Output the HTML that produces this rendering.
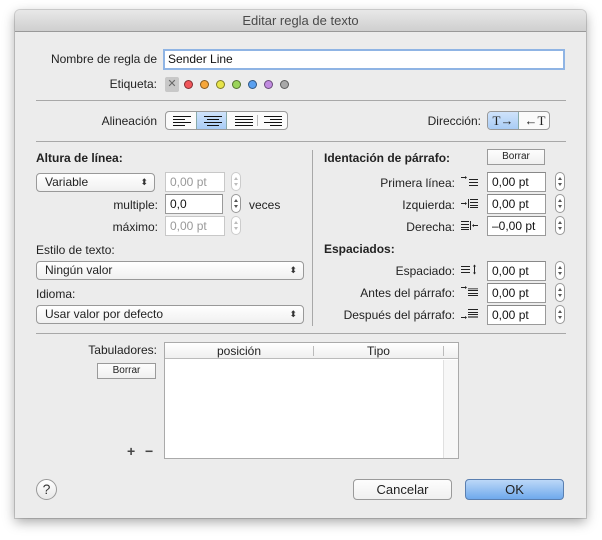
<!DOCTYPE html>
<html><head><meta charset="utf-8"><style>
*{box-sizing:border-box;margin:0;padding:0}
body{width:602px;height:540px;background:#fff;font-family:"Liberation Sans",sans-serif;font-size:12px;color:#222;position:relative;overflow:hidden}
.win{position:absolute;left:15px;top:10px;width:571px;height:508px;background:#ececec;border-radius:5px 5px 0 0;box-shadow:0 4px 12px rgba(0,0,0,.35),0 0 0 1px rgba(0,0,0,.15)}
.tb{position:absolute;left:0;top:0;width:571px;height:22px;background:linear-gradient(#e8e8e8,#cfcfcf);border-bottom:1px solid #999;border-radius:5px 5px 0 0;text-align:center;font-size:13px;line-height:21px;color:#4a4a4a}
.a{position:absolute;white-space:nowrap}
.r{text-align:right}
.b{font-weight:bold}
.hr{position:absolute;height:1px;background:#a8a8a8}
.fld{position:absolute;background:#fff;border:1px solid #9a9a9a;border-top-color:#888;height:20px;line-height:18px;padding-left:4px;font-size:12px}
.dis{color:#999;border-color:#c8c8c8}
.st{position:absolute;width:10px;height:19px;border:1px solid #999;border-radius:5px;background:#fff}
.st:before,.st:after{content:"";position:absolute;left:2px;border-left:2px solid transparent;border-right:2px solid transparent}
.st:before{top:4px;border-bottom:3px solid #555}
.st:after{bottom:4px;border-top:3px solid #555}
.st.d{border-color:#ccc}.st.d:before{border-bottom-color:#bbb}.st.d:after{border-top-color:#bbb}
.pop{position:absolute;height:19px;border:1px solid #999;border-radius:4px;background:linear-gradient(#fff,#f0f0f0);line-height:17px;padding-left:8px;font-size:12px}
.pop:after{content:"⬍";position:absolute;right:6px;top:0;font-size:9px;color:#333}
.btn{position:absolute;border:1px solid #9a9a9a;background:linear-gradient(#fdfdfd,#f0f0f0);text-align:center;font-size:10px}
.dot{position:absolute;top:80px;width:9px;height:9px;border-radius:50%;border:1px solid rgba(0,0,0,.45)}
.ic{position:absolute;left:461px}
</style></head><body>
<div class="win"></div>
<div class="tb" style="left:15px;top:10px;position:absolute">Editar regla de texto</div>

<div class="a r" style="right:445px;top:52px">Nombre de regla de</div>
<div class="fld" style="left:163px;top:49px;width:402px;height:21px;border:2px solid #8fb4e4;line-height:16px;padding-left:3px;color:#111">Sender Line</div>

<div class="a r" style="right:445px;top:77px">Etiqueta:</div>
<div class="a" style="left:165px;top:77px;width:14px;height:15px;background:#c8c8c8;border-radius:2px;color:#666;font-size:11px;text-align:center;line-height:15px">✕</div>
<div class="dot" style="left:184px;background:#f0555a"></div>
<div class="dot" style="left:200px;background:#f6a63a"></div>
<div class="dot" style="left:216px;background:#e7e44a"></div>
<div class="dot" style="left:232px;background:#9bd45a"></div>
<div class="dot" style="left:248px;background:#5aa0f0"></div>
<div class="dot" style="left:264px;background:#c18be0"></div>
<div class="dot" style="left:280px;background:#a8a8a8"></div>

<div class="hr" style="left:36px;top:100px;width:530px"></div>

<div class="a r" style="right:445px;top:114px">Alineación</div>
<div class="a" style="left:165px;top:111px;width:123px;height:19px;border:1px solid #999;border-radius:4px;background:#fafafa;overflow:hidden">
 <div class="a" style="left:30px;top:0;width:31px;height:17px;background:linear-gradient(#cfe3fb,#a9ccf5);border-left:1px solid #8aa;border-right:1px solid #8aa"></div>
 <div class="a" style="left:91px;top:3px;width:1px;height:11px;background:#bbb"></div>
 <svg class="a" style="left:0;top:0" width="123" height="17" stroke="#111" stroke-width="1">
  <path d="M7 4.5h18M7 7.5h12M7 10.5h18M7 13.5h12"/>
  <path d="M38 4.5h18M41 7.5h12M38 10.5h18M41 13.5h12"/>
  <path d="M69 4.5h18M69 7.5h18M69 10.5h18M69 13.5h18"/>
  <path d="M98 4.5h18M104 7.5h12M98 10.5h18M104 13.5h12"/>
 </svg>
</div>

<div class="a r" style="right:121px;top:114px">Dirección:</div>
<div class="a" style="left:487px;top:111px;width:63px;height:19px;border:1px solid #999;border-radius:4px;background:#fafafa;overflow:hidden;font-family:'Liberation Serif',serif;font-size:13px">
 <div class="a" style="left:0;top:0;width:31px;height:17px;background:linear-gradient(#cfe3fb,#a9ccf5);border-right:1px solid #8aa;text-align:center;line-height:17px">T→</div>
 <div class="a" style="left:32px;top:0;width:30px;height:17px;text-align:center;line-height:17px">←T</div>
</div>

<div class="hr" style="left:36px;top:141px;width:530px"></div>
<div class="a" style="left:312px;top:150px;width:1px;height:176px;background:#a8a8a8"></div>

<div class="a b" style="left:36px;top:151px">Altura de línea:</div>
<div class="pop" style="left:36px;top:173px;width:119px">Variable</div>
<div class="fld dis" style="left:165px;top:172px;width:60px">0,00 pt</div>
<div class="st d" style="left:231px;top:172px"></div>
<div class="a r" style="right:444px;top:198px">multiple:</div>
<div class="fld" style="left:165px;top:194px;width:58px;color:#111">0,0</div>
<div class="st" style="left:231px;top:194px"></div>
<div class="a" style="left:249px;top:198px">veces</div>
<div class="a r" style="right:444px;top:220px">máximo:</div>
<div class="fld dis" style="left:165px;top:216px;width:60px">0,00 pt</div>
<div class="st d" style="left:231px;top:216px"></div>

<div class="a" style="left:36px;top:243px">Estilo de texto:</div>
<div class="pop" style="left:36px;top:261px;width:268px">Ningún valor</div>
<div class="a" style="left:36px;top:287px">Idioma:</div>
<div class="pop" style="left:36px;top:305px;width:268px">Usar valor por defecto</div>

<div class="a b" style="left:324px;top:151px">Identación de párrafo:</div>
<div class="btn" style="left:487px;top:149px;width:58px;height:16px;line-height:14px">Borrar</div>

<div class="a r" style="right:147px;top:176px">Primera línea:</div>
<svg class="ic" style="top:176px" width="18" height="10" stroke="#222" stroke-width="1" fill="#222"><path d="M0 1.5h4M8 3.5h9M8 6.5h9M8 9.5h9"/><path d="M4 0l2 1.5-2 1.5z" stroke="none"/></svg>
<div class="fld" style="left:487px;top:172px;width:59px;color:#111">0,00 pt</div>
<div class="st" style="left:555px;top:172px"></div>
<div class="a r" style="right:147px;top:198px">Izquierda:</div>
<svg class="ic" style="top:198px" width="18" height="10" stroke="#222" stroke-width="1" fill="#222"><path d="M0 5.5h4M7.5 1v9M9 1.5h8M9 4.5h8M9 7.5h8M9 9.5h8"/><path d="M4 4l2 1.5-2 1.5z" stroke="none"/></svg>
<div class="fld" style="left:487px;top:194px;width:59px;color:#111">0,00 pt</div>
<div class="st" style="left:555px;top:194px"></div>
<div class="a r" style="right:147px;top:220px">Derecha:</div>
<svg class="ic" style="top:220px" width="18" height="10" stroke="#222" stroke-width="1" fill="#222"><path d="M0 1.5h8M0 4.5h8M0 7.5h8M0 9.5h8M9.5 1v9M13 5.5h4"/><path d="M13 4l-2 1.5 2 1.5z" stroke="none"/></svg>
<div class="fld" style="left:487px;top:216px;width:59px;color:#111">–0,00 pt</div>
<div class="st" style="left:555px;top:216px"></div>

<div class="a b" style="left:324px;top:242px">Espaciados:</div>
<div class="a r" style="right:147px;top:264px">Espaciado:</div>
<svg class="ic" style="top:264px" width="18" height="11" stroke="#222" stroke-width="1" fill="#222"><path d="M0 2.5h9M0 5.5h9M0 8.5h9M13.5 2v7"/><path d="M12 2.5l1.5-2 1.5 2zM12 8.5l1.5 2 1.5-2z" stroke="none"/></svg>
<div class="fld" style="left:487px;top:261px;width:59px;color:#111">0,00 pt</div>
<div class="st" style="left:555px;top:261px"></div>
<div class="a r" style="right:147px;top:286px">Antes del párrafo:</div>
<svg class="ic" style="top:286px" width="18" height="11" stroke="#222" stroke-width="1" fill="#222"><path d="M0 1.5h4M7 4.5h10M7 7.5h10M7 9.5h10"/><rect x="7" y="2" width="10" height="1.5" fill="#777" stroke="none"/><path d="M4 0l2 1.5-2 1.5z" stroke="none"/></svg>
<div class="fld" style="left:487px;top:283px;width:59px;color:#111">0,00 pt</div>
<div class="st" style="left:555px;top:283px"></div>
<div class="a r" style="right:147px;top:308px">Después del párrafo:</div>
<svg class="ic" style="top:308px" width="18" height="11" stroke="#222" stroke-width="1" fill="#222"><path d="M0 9.5h4M7 1.5h10M7 4.5h10M7 6.5h10"/><rect x="7" y="8" width="10" height="2" fill="#777" stroke="none"/><path d="M4 8l2 1.5-2 1.5z" stroke="none"/></svg>
<div class="fld" style="left:487px;top:305px;width:59px;color:#111">0,00 pt</div>
<div class="st" style="left:555px;top:305px"></div>

<div class="hr" style="left:36px;top:333px;width:530px"></div>

<div class="a r" style="right:445px;top:343px">Tabuladores:</div>
<div class="btn" style="left:97px;top:363px;width:59px;height:16px;line-height:14px">Borrar</div>
<div class="a b" style="left:127px;top:443px;font-size:14px;color:#444">+</div>
<div class="a b" style="left:145px;top:443px;font-size:14px;color:#444">−</div>
<div class="a" style="left:164px;top:342px;width:295px;height:117px;background:#fff;border:1px solid #aaa">
 <div class="a" style="left:0;top:0;width:293px;height:16px;border-bottom:1px solid #bbb;background:linear-gradient(#fff,#f0f0f0)"></div>
 <div class="a" style="left:0;top:1px;width:148px;text-align:center">posición</div>
 <div class="a" style="left:148px;top:3px;width:1px;height:10px;background:#bbb"></div>
 <div class="a" style="left:149px;top:1px;width:129px;text-align:center">Tipo</div>
 <div class="a" style="left:278px;top:3px;width:1px;height:10px;background:#bbb"></div>
 <div class="a" style="left:278px;top:17px;width:15px;height:98px;background:#f7f7f7;border-left:1px solid #e0e0e0"></div>
</div>

<div class="a" style="left:36px;top:479px;width:21px;height:21px;border-radius:50%;border:1px solid #999;background:linear-gradient(#fff,#e8e8e8);text-align:center;line-height:19px;font-size:14px;color:#333">?</div>
<div class="btn" style="left:353px;top:479px;width:99px;height:21px;border-radius:4px;font-size:13px;line-height:19px">Cancelar</div>
<div class="btn" style="left:465px;top:479px;width:99px;height:21px;border-radius:4px;font-size:13px;line-height:19px;background:linear-gradient(#bcd8f8,#6fa9ec);border-color:#5a7fb0">OK</div>
</body></html>
